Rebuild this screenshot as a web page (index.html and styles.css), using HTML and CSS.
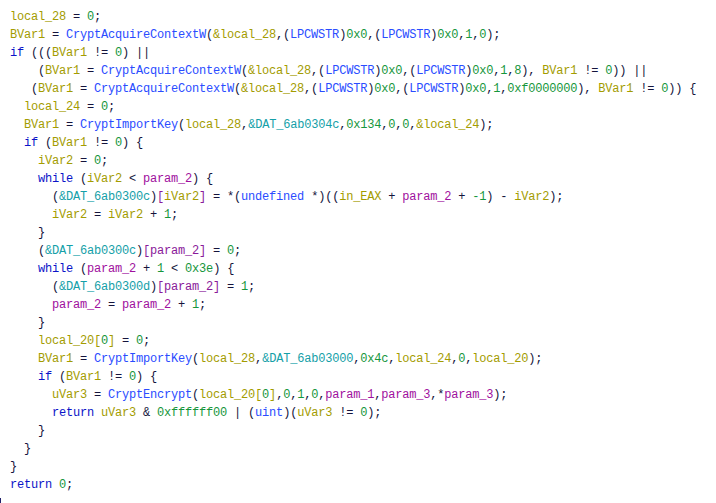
FILE: index.html
```html
<!DOCTYPE html>
<html>
<head>
<meta charset="utf-8">
<link rel="stylesheet" href="styles.css">
</head>
<body>
<div class="code">
<div class="ln"><span class="v">local_28</span> = <span class="c">0</span>;</div>
<div class="ln"><span class="v">BVar1</span> = <span class="f">CryptAcquireContextW</span>(<span class="v">&amp;local_28</span>,(<span class="t">LPCWSTR</span>)<span class="c">0x0</span>,(<span class="t">LPCWSTR</span>)<span class="c">0x0</span>,<span class="c">1</span>,<span class="c">0</span>);</div>
<div class="ln"><span class="k">if</span> (((<span class="v">BVar1</span> != <span class="c">0</span>) ||</div>
<div class="ln">    (<span class="v">BVar1</span> = <span class="f">CryptAcquireContextW</span>(<span class="v">&amp;local_28</span>,(<span class="t">LPCWSTR</span>)<span class="c">0x0</span>,(<span class="t">LPCWSTR</span>)<span class="c">0x0</span>,<span class="c">1</span>,<span class="c">8</span>), <span class="v">BVar1</span> != <span class="c">0</span>)) ||</div>
<div class="ln">   (<span class="v">BVar1</span> = <span class="f">CryptAcquireContextW</span>(<span class="v">&amp;local_28</span>,(<span class="t">LPCWSTR</span>)<span class="c">0x0</span>,(<span class="t">LPCWSTR</span>)<span class="c">0x0</span>,<span class="c">1</span>,<span class="c">0xf0000000</span>), <span class="v">BVar1</span> != <span class="c">0</span>)) {</div>
<div class="ln">  <span class="v">local_24</span> = <span class="c">0</span>;</div>
<div class="ln">  <span class="v">BVar1</span> = <span class="f">CryptImportKey</span>(<span class="v">local_28</span>,<span class="g">&amp;DAT_6ab0304c</span>,<span class="c">0x134</span>,<span class="c">0</span>,<span class="c">0</span>,<span class="v">&amp;local_24</span>);</div>
<div class="ln">  <span class="k">if</span> (<span class="v">BVar1</span> != <span class="c">0</span>) {</div>
<div class="ln">    <span class="v">iVar2</span> = <span class="c">0</span>;</div>
<div class="ln">    <span class="k">while</span> (<span class="v">iVar2</span> &lt; <span class="p">param_2</span>) {</div>
<div class="ln">      (<span class="g">&amp;DAT_6ab0300c</span>)<span class="b">[</span><span class="v">iVar2</span><span class="b">]</span> = *(<span class="t">undefined</span> *)((<span class="v">in_EAX</span> + <span class="p">param_2</span> + <span class="c">-1</span>) - <span class="v">iVar2</span>);</div>
<div class="ln">      <span class="v">iVar2</span> = <span class="v">iVar2</span> + <span class="c">1</span>;</div>
<div class="ln">    }</div>
<div class="ln">    (<span class="g">&amp;DAT_6ab0300c</span>)<span class="b">[param_2]</span> = <span class="c">0</span>;</div>
<div class="ln">    <span class="k">while</span> (<span class="p">param_2</span> + <span class="c">1</span> &lt; <span class="c">0x3e</span>) {</div>
<div class="ln">      (<span class="g">&amp;DAT_6ab0300d</span>)<span class="b">[param_2]</span> = <span class="c">1</span>;</div>
<div class="ln">      <span class="p">param_2</span> = <span class="p">param_2</span> + <span class="c">1</span>;</div>
<div class="ln">    }</div>
<div class="ln">    <span class="v">local_20[</span><span class="c">0</span><span class="v">]</span> = <span class="c">0</span>;</div>
<div class="ln">    <span class="v">BVar1</span> = <span class="f">CryptImportKey</span>(<span class="v">local_28</span>,<span class="g">&amp;DAT_6ab03000</span>,<span class="c">0x4c</span>,<span class="v">local_24</span>,<span class="c">0</span>,<span class="v">local_20</span>);</div>
<div class="ln">    <span class="k">if</span> (<span class="v">BVar1</span> != <span class="c">0</span>) {</div>
<div class="ln">      <span class="v">uVar3</span> = <span class="f">CryptEncrypt</span>(<span class="v">local_20[</span><span class="c">0</span><span class="v">]</span>,<span class="c">0</span>,<span class="c">1</span>,<span class="c">0</span>,<span class="p">param_1</span>,<span class="p">param_3</span>,*<span class="p">param_3</span>);</div>
<div class="ln">      <span class="k">return</span> <span class="v">uVar3</span> &amp; <span class="c">0xffffff00</span> | (<span class="t">uint</span>)(<span class="v">uVar3</span> != <span class="c">0</span>);</div>
<div class="ln">    }</div>
<div class="ln">  }</div>
<div class="ln">}</div>
<div class="ln"><span class="k">return</span> <span class="c">0</span>;</div>
<div class="ln caret-line"><span class="caret"></span></div>
</div>
</body>
</html>
```
FILE: styles.css
```css
html, body {
  margin: 0;
  padding: 0;
  background: #ffffff;
}
.code {
  padding: 8px 0 0 10px;
  font-family: "Liberation Mono", "Courier New", monospace;
  font-size: 12px;
  letter-spacing: -0.2px;
  line-height: 18px;
  color: #14143c;
}
.ln {
  white-space: pre;
  height: 18px;
}
.caret-line {
  margin-left: -10px;
}
.caret {
  display: inline-block;
  width: 1px;
  height: 14px;
  margin-top: 4px;
  background: #20206a;
  vertical-align: top;
}
.k { color: #0a14c8; }
.f { color: #2a4cff; }
.t { color: #2a4cff; }
.v { color: #a39c00; }
.c { color: #16963c; }
.p { color: #a0109e; }
.g { color: #14a0a8; }
.b { color: #8a1a9a; }
```
